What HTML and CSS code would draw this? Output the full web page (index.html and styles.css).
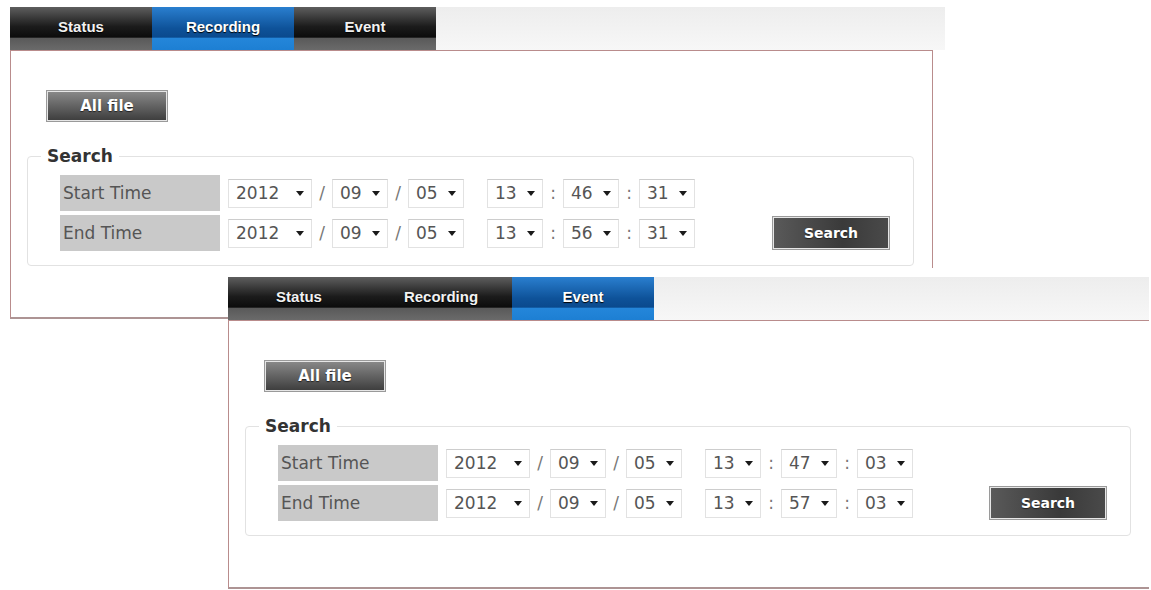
FILE: index.html
```html
<!DOCTYPE html>
<html lang="en">
<head>
    <meta charset="UTF-8">
    <title>Playback Search</title>
    <link rel="stylesheet" href="styles.css">
</head>
<body>
    <!-- Recording tab window -->
    <div class="window window-recording">
        <div class="tabbar">
            <div class="tab">Status</div>
            <div class="tab active">Recording</div>
            <div class="tab">Event</div>
            <div class="tab-fill"></div>
        </div>
        <div class="panel">
            <button class="btn btn-all">All file</button>
            <fieldset class="search">
                <legend>Search</legend>
                <div class="rows">
                    <div class="row">
                        <div class="label">Start Time</div>
                        <div class="date">
                            <span class="pick year">2012</span><span class="sep">/</span>
                            <span class="pick">09</span><span class="sep">/</span>
                            <span class="pick">05</span>
                        </div>
                        <div class="time">
                            <span class="pick">13</span><span class="sep">:</span>
                            <span class="pick">46</span><span class="sep">:</span>
                            <span class="pick">31</span>
                        </div>
                    </div>
                    <div class="row">
                        <div class="label">End Time</div>
                        <div class="date">
                            <span class="pick year">2012</span><span class="sep">/</span>
                            <span class="pick">09</span><span class="sep">/</span>
                            <span class="pick">05</span>
                        </div>
                        <div class="time">
                            <span class="pick">13</span><span class="sep">:</span>
                            <span class="pick">56</span><span class="sep">:</span>
                            <span class="pick">31</span>
                        </div>
                        <button class="btn btn-search">Search</button>
                    </div>
                </div>
            </fieldset>
        </div>
    </div>

    <!-- Event tab window -->
    <div class="window window-event">
        <div class="tabbar">
            <div class="tab">Status</div>
            <div class="tab">Recording</div>
            <div class="tab active">Event</div>
            <div class="tab-fill"></div>
        </div>
        <div class="panel">
            <button class="btn btn-all">All file</button>
            <fieldset class="search">
                <legend>Search</legend>
                <div class="rows">
                    <div class="row">
                        <div class="label">Start Time</div>
                        <div class="date">
                            <span class="pick year">2012</span><span class="sep">/</span>
                            <span class="pick">09</span><span class="sep">/</span>
                            <span class="pick">05</span>
                        </div>
                        <div class="time">
                            <span class="pick">13</span><span class="sep">:</span>
                            <span class="pick">47</span><span class="sep">:</span>
                            <span class="pick">03</span>
                        </div>
                    </div>
                    <div class="row">
                        <div class="label">End Time</div>
                        <div class="date">
                            <span class="pick year">2012</span><span class="sep">/</span>
                            <span class="pick">09</span><span class="sep">/</span>
                            <span class="pick">05</span>
                        </div>
                        <div class="time">
                            <span class="pick">13</span><span class="sep">:</span>
                            <span class="pick">57</span><span class="sep">:</span>
                            <span class="pick">03</span>
                        </div>
                        <button class="btn btn-search">Search</button>
                    </div>
                </div>
            </fieldset>
        </div>
    </div>
</body>
</html>
```

FILE: styles.css
```css
* {
    box-sizing: border-box;
    margin: 0;
    padding: 0;
}

body {
    position: relative;
    width: 1151px;
    height: 590px;
    overflow: hidden;
    background: #fff;
    font-family: 'DejaVu Sans', sans-serif;
}

/* Two overlapping browser windows */
.window {
    position: absolute;
    background: #fff;
    padding-top: 9px;
}

.window-recording {
    left: 10px;
    top: -2px;
    width: 923px;
}

.window-recording .tab-fill {
    margin-right: -12px;
}

.window-event {
    left: 228px;
    top: 268px;
    width: 921px;
}

/* cut off by the screen edge */
.window-event .panel {
    border-right: none;
}

/* Tab bar */
.tabbar {
    display: flex;
    height: 43px;
}

.tab {
    width: 142px;
    display: flex;
    align-items: center;
    justify-content: center;
    padding-bottom: 4px;
    font-family: 'Liberation Sans', sans-serif;
    font-size: 15px;
    font-weight: 700;
    color: #f2f2f2;
    text-shadow: 0 1px 1px #000;
    background: linear-gradient(#5e5e5e 0%, #1c1c1c 45%, #0c0c0c 70%, #5a5a5a 73%, #6a6a6a 100%);
}

.tab.active {
    color: #fff;
    background: linear-gradient(#2a7fcf 0%, #0e5299 50%, #0a4a8e 70%, #2486da 73%, #1d7fd3 100%);
}

.tab-fill {
    flex: 1;
    background: linear-gradient(#ededed, #f7f7f7);
}

/* Window body */
.panel {
    border: 1px solid #b98c8c;
    border-bottom: 2px solid #ad9494;
    padding: 39px 18px 51px 16px;
}

.btn {
    display: block;
    border: 1px solid #9a9a9a;
    box-shadow: inset 0 0 0 1px #e6e6e6;
    background: linear-gradient(#8a8a8a, #3c3c3c);
    color: #fff;
    font-family: 'DejaVu Sans', sans-serif;
    font-weight: 700;
    text-shadow: 0 1px 1px #222;
}

.btn-all {
    width: 122px;
    height: 32px;
    margin-left: 19px;
    font-size: 15px;
}

.btn-search {
    width: 118px;
    height: 34px;
    margin-left: auto;
    font-size: 14px;
    background: linear-gradient(90deg, #5a5a5a, #3a3a3a 60%, #4a4a4a);
}

/* Search box */
.search {
    margin-top: 24px;
    border: 1px solid #e2e2e2;
    border-radius: 4px;
    padding: 9px 23px 14px 13px;
}

.search legend {
    padding: 0 6px;
    line-height: 20px;
    font-size: 17px;
    font-weight: 700;
    color: #333;
}

.rows {
    display: flex;
    flex-direction: column;
    gap: 4px;
    margin-left: 19px;
}

.row {
    display: flex;
    align-items: center;
    height: 36px;
}

.label {
    width: 160px;
    height: 100%;
    display: flex;
    align-items: center;
    padding-left: 3px;
    background: #c9c9c9;
    color: #555;
    font-size: 17px;
}

.date,
.time {
    display: flex;
    align-items: center;
}

.date {
    margin-left: 8px;
}

.time {
    margin-left: 23px;
}

.sep {
    width: 20px;
    text-align: center;
    color: #777;
    font-size: 17px;
}

.pick {
    width: 56px;
    height: 29px;
    display: flex;
    align-items: center;
    justify-content: space-between;
    padding: 0 7px 0 7px;
    border: 1px solid #e2e2e2;
    border-top-color: #cdcdcd;
    background: #fff;
    color: #555;
    font-size: 17px;
}

.pick.year {
    width: 84px;
}

/* dropdown arrow */
.pick::after {
    content: '';
    border-left: 4px solid transparent;
    border-right: 4px solid transparent;
    border-top: 5px solid #1a1a1a;
}
```
